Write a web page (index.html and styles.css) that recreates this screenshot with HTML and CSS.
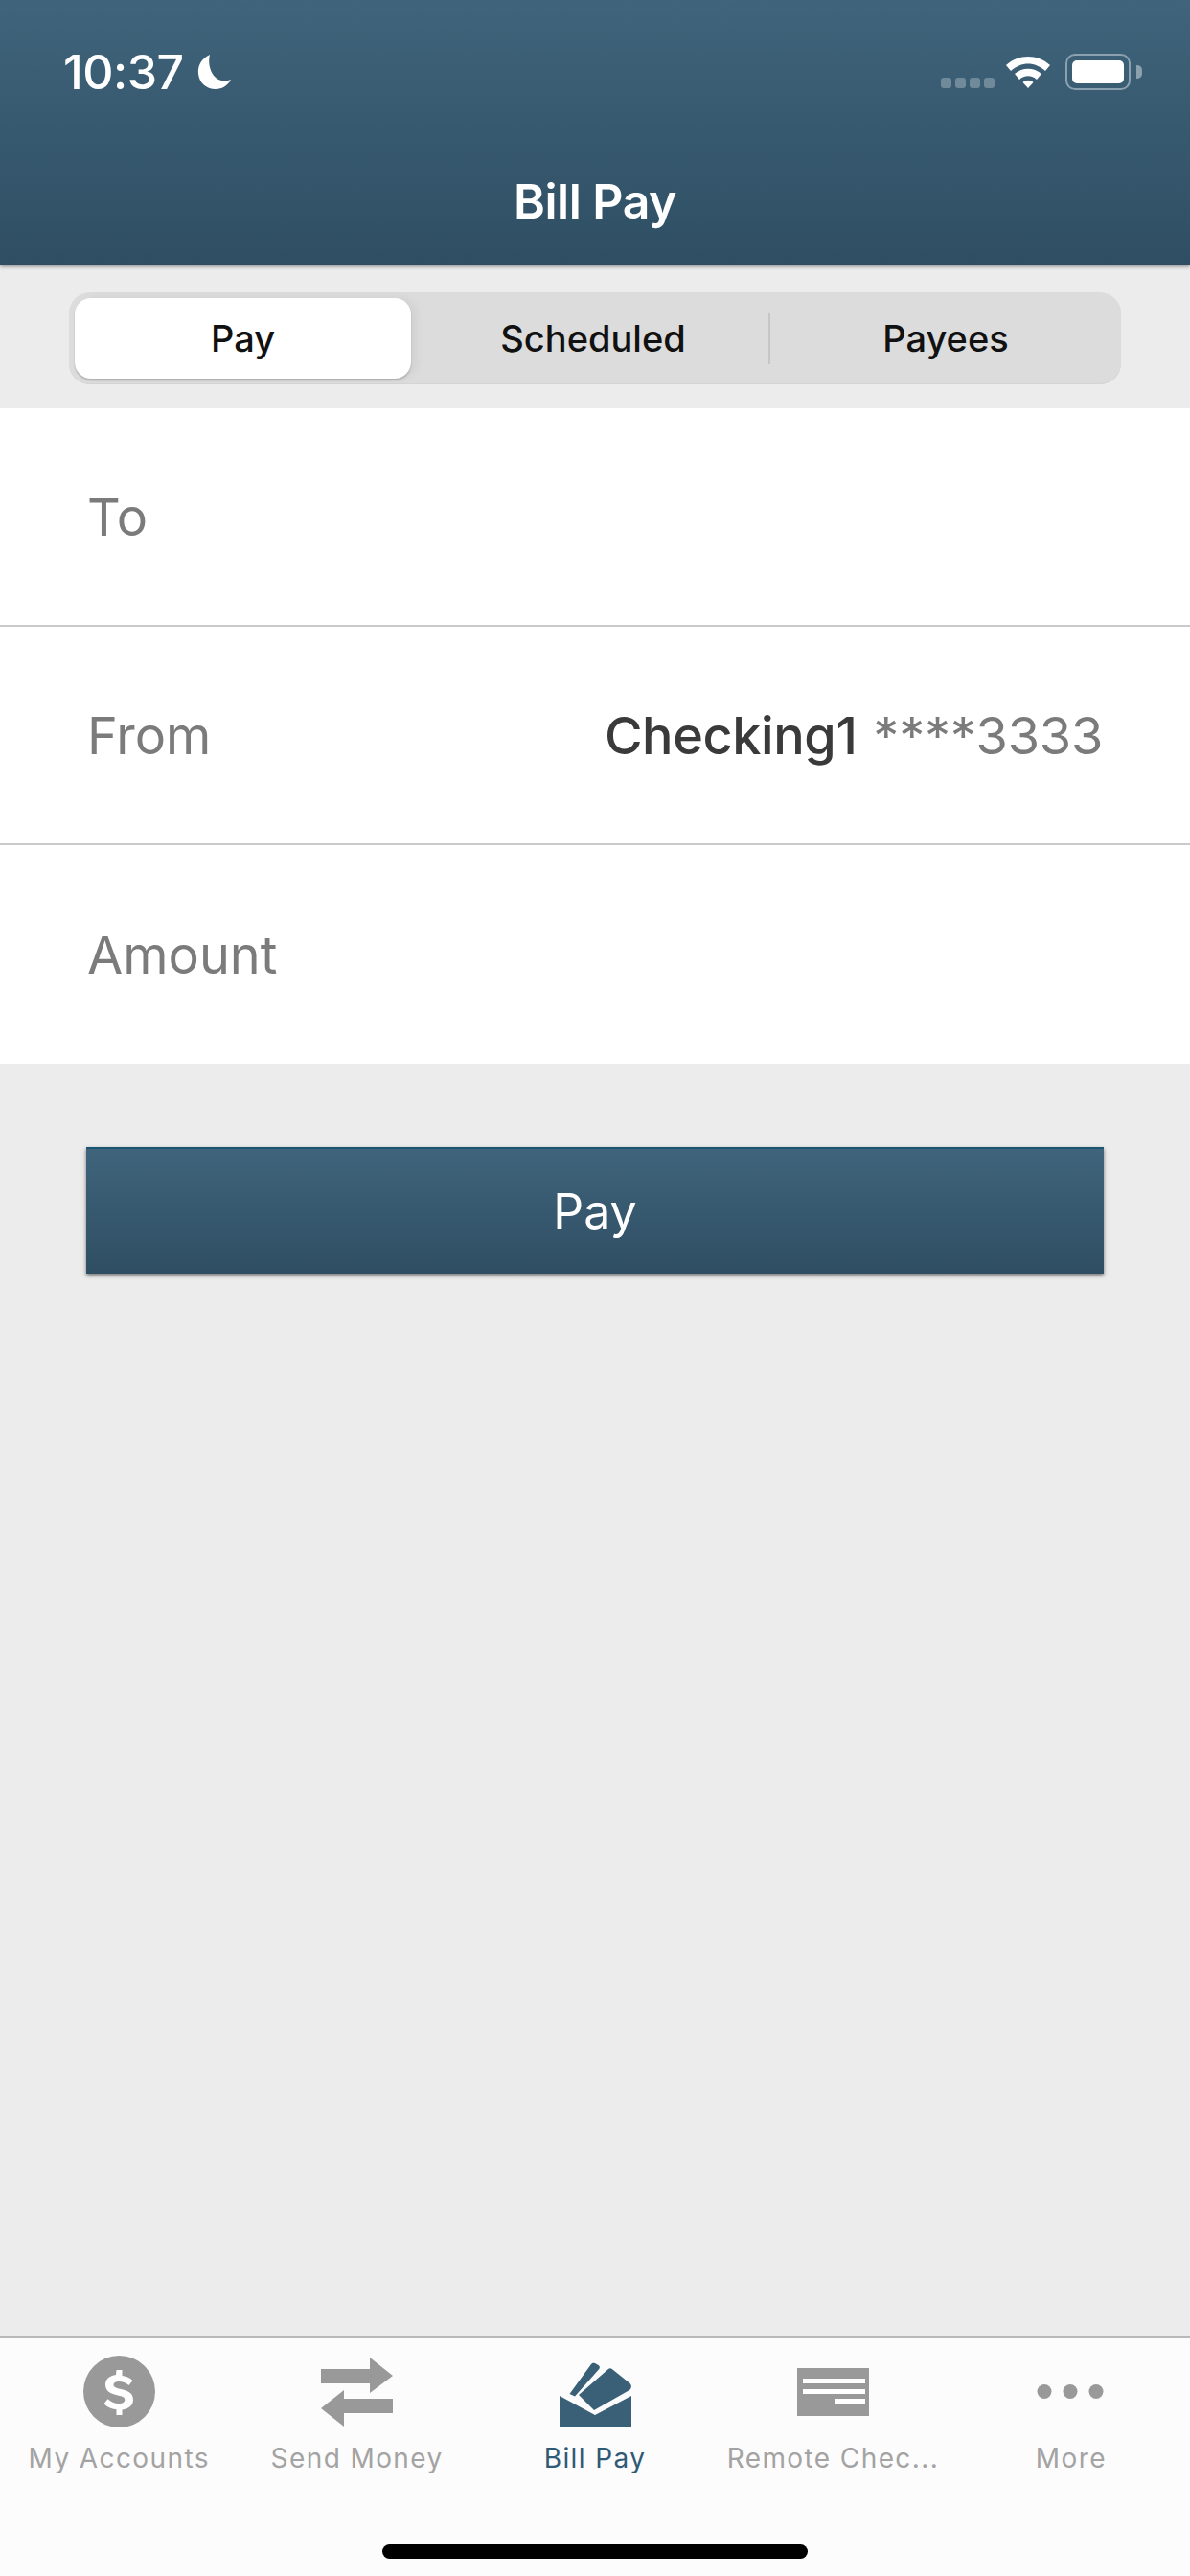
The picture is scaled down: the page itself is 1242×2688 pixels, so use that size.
FILE: index.html
```html
<!DOCTYPE html>
<html lang="en">

<head>
    <meta charset="UTF-8">
    <meta name="viewport" content="width=device-width, initial-scale=1.0">
    <title>Bill Pay</title>
    <link rel="stylesheet" href="styles.css">
</head>

<body>
    <div class="app">
        <!-- Header -->
        <header class="header">
            <div class="status-bar">
                <div class="status-left">
                    <span class="time">10:37</span>
                    <svg class="moon" viewBox="0 0 36 38">
                        <path d="M13 1C4 5 0 13 1 21c1 10 9 16 18 16 7 0 13-4 16-10-3 1-6 2-9 1C16 27 10 13 13 1z" fill="#fff" />
                    </svg>
                </div>
                <div class="status-right">
                    <div class="signal"><i></i><i></i><i></i><i></i></div>
                    <svg class="wifi" viewBox="0 0 48 36">
                        <path d="M1 12C14 0 34 0 47 12l-5 6C31 8 17 8 6 18z" fill="#fff" />
                        <path d="M10 21c8-7 20-7 28 0l-5 6c-5-5-13-5-18 0z" fill="#fff" />
                        <path d="M18.500 30c3-3 8-3 11 0L24 36z" fill="#fff" />
                    </svg>
                    <div class="battery">
                        <div class="battery-level"></div>
                    </div>
                    <div class="battery-nub"></div>
                </div>
            </div>
            <h1 class="title">Bill Pay</h1>
        </header>

        <!-- Segmented control -->
        <div class="segment-wrap">
            <div class="segment">
                <div class="segment-item segment-active">Pay</div>
                <div class="segment-item segment-middle">Scheduled</div>
                <div class="segment-divider"></div>
                <div class="segment-item segment-last">Payees</div>
            </div>
        </div>

        <!-- Form rows -->
        <div class="form">
            <div class="row">
                <span class="row-label">To</span>
            </div>
            <div class="row">
                <span class="row-label">From</span>
                <span class="row-value"><b>Checking1</b> ****3333</span>
            </div>
            <div class="row">
                <span class="row-label">Amount</span>
            </div>
        </div>

        <main class="content">
            <button class="pay-button">Pay</button>
        </main>

        <!-- Tab bar -->
        <nav class="tabbar">
            <div class="tabs">
                <div class="tab">
                    <svg class="tab-icon" viewBox="0 0 75 75">
                        <circle cx="37.500" cy="37.500" r="37.500" fill="#999" />
                        <path d="M34.500 15h6v6c5 .6 8.500 2.500 11 5l-4 5c-3-2.500-6.500-4-10.500-4-3.500 0-5.500 1.300-5.500 3.500 0 2.300 2.200 3.200 7 4.300 8 1.800 13.500 4.300 13.500 11.200 0 6-4.500 9.500-11.500 10.400V62h-6v-5.700c-5.500-.6-10-2.800-13-6l4-5c3.200 3 7 4.700 11.500 4.700 4 0 6.300-1.500 6.300-4 0-2.300-2.200-3.400-7.300-4.500-7.500-1.700-13-4.200-13-11 0-5.800 4.300-9.500 11-10.400z" fill="#fff" />
                    </svg>
                    <span class="tab-label">My Accounts</span>
                </div>
                <div class="tab">
                    <svg class="tab-icon" viewBox="0 0 75 75">
                        <path d="M0 14H51V2L75 21 51 39V29H0z" fill="#999" />
                        <path d="M75 45H24V36L0 55 24 74V60H75z" fill="#999" />
                    </svg>
                    <span class="tab-label">Send Money</span>
                </div>
                <div class="tab tab-active">
                    <svg class="tab-icon" viewBox="0 0 75 75">
                        <path d="M10.500 40L33 9c1-1.400 2.600-1.700 4-1l3.500 2c1.500 1 1.800 2.500.8 4L16 42.500z" fill="#3a6078" />
                        <path d="M20 41L51 14c1.200-1 2.600-1 3.800 0l18.700 15c2 1.800 1.800 5.500-.5 7L36 57z" fill="#3a6078" />
                        <path d="M0 42l37 20 38-20v33H0z" fill="#3a6078" />
                    </svg>
                    <span class="tab-label">Bill Pay</span>
                </div>
                <div class="tab">
                    <svg class="tab-icon" viewBox="0 0 75 75">
                        <path d="M0 13h75v50H0z" fill="#999" />
                        <path d="M6 24h65v5H6zM6 35h65v5H6zM39 45h32v5H39z" fill="#fff" />
                    </svg>
                    <span class="tab-label">Remote Chec...</span>
                </div>
                <div class="tab">
                    <svg class="tab-icon" viewBox="0 0 75 75">
                        <circle cx="10" cy="37.500" r="7.500" fill="#999" />
                        <circle cx="37" cy="37.500" r="7.500" fill="#999" />
                        <circle cx="64" cy="37.500" r="7.500" fill="#999" />
                    </svg>
                    <span class="tab-label">More</span>
                </div>
            </div>
            <div class="home-bar"></div>
        </nav>
    </div>
</body>

</html>
```

FILE: styles.css
```css
* {
    box-sizing: border-box;
}

body {
    margin: 0;
    background: #ececec;
    font-family: 'Inter', 'Liberation Sans', sans-serif;
}

.app {
    display: flex;
    flex-direction: column;
    height: 2688px;
    overflow: hidden;
}

/* Header */
.header {
    position: relative;
    z-index: 1;
    height: 276px;
    padding: 56px 50px 0 66px;
    background: linear-gradient(#3f647b, #2f4e63);
    box-shadow: 0 2px 4px rgba(0, 0, 0, 0.45);
    color: #FFFFFF;
}

.status-bar {
    display: flex;
    justify-content: space-between;
    align-items: flex-start;
    height: 38px;
}

.status-left {
    display: flex;
    align-items: center;
    gap: 14px;
}

.time {
    font-size: 50px;
    font-weight: 500;
    line-height: 38px;
    letter-spacing: -0.5px;
}

.moon {
    width: 36px;
    height: 38px;
}

.status-right {
    display: flex;
    align-items: flex-start;
}

.signal {
    display: flex;
    gap: 4px;
    margin-top: 25px;
    margin-right: 11px;
}

.signal i {
    width: 11px;
    height: 11px;
    border-radius: 3px;
    background: rgba(255, 255, 255, 0.28);
}

.wifi {
    width: 48px;
    height: 36px;
    margin-right: 15px;
}

.battery {
    width: 68px;
    height: 38px;
    padding: 5px;
    border: 2px solid #8ba1b0;
    border-radius: 10px;
}

.battery-level {
    height: 100%;
    border-radius: 5px;
    background: #FFFFFF;
}

.battery-nub {
    width: 6px;
    height: 14px;
    margin: 12px 0 0 6px;
    border-radius: 0 5px 5px 0;
    background: #8ba1b0;
}

.title {
    margin: 86px 0 0 -66px;
    width: 1242px;
    text-align: center;
    font-size: 50px;
    font-weight: 600;
    line-height: 60px;
    letter-spacing: -0.5px;
}

/* Segmented control */
.segment-wrap {
    height: 150px;
    padding: 29px 72px 0;
}

.segment {
    display: flex;
    align-items: center;
    height: 96px;
    padding: 0 6px;
    border-radius: 22px;
    background: #dcdcdc;
    box-shadow: inset 0 -1px 0 #d4d4d4;
}

.segment-item {
    flex: 1;
    height: 84px;
    font-size: 38px;
    font-weight: 500;
    line-height: 84px;
    text-align: center;
    color: #111111;
}

.segment-active {
    flex: none;
    width: 351px;
    border-radius: 17px;
    background: #FFFFFF;
    box-shadow: 0 2px 2px rgba(0, 0, 0, 0.18), 6px 0 10px rgba(0, 0, 0, 0.05);
}

.segment-middle {
    flex: none;
    width: 373px;
    padding-left: 7px;
}

.segment-last {
    padding-left: 6px;
}

.segment-divider {
    width: 2px;
    height: 53px;
    background: #c6c6c6;
}

/* Form */
.form {
    background: #FFFFFF;
}

.row {
    display: flex;
    justify-content: space-between;
    align-items: center;
    height: 228px;
    padding: 0 91px;
    border-bottom: 2px solid #cacaca;
    font-size: 54px;
    color: #7b7b7b;
}

.row:last-child {
    border-bottom: none;
}

.row-value {
    letter-spacing: -0.25px;
}

.row-value b {
    font-weight: 500;
    color: #3a3a3a;
    margin-right: 2px;
    letter-spacing: -0.4px;
}

/* Content */
.content {
    flex: 1;
    padding: 87px 90px 0;
}

.pay-button {
    display: block;
    width: 1062px;
    height: 132px;
    border: none;
    border-top: 2px solid #1a5572;
    background: linear-gradient(#3f647b, #2f4e63);
    box-shadow: 0 2px 4px rgba(0, 0, 0, 0.5);
    font-family: inherit;
    font-size: 50px;
    color: #FFFFFF;
}

/* Tab bar */
.tabbar {
    height: 250px;
    border-top: 2px solid #b9b9b9;
    background: #fcfcfc;
}

.tabs {
    display: flex;
    padding-top: 18px;
}

.tab {
    flex: 1;
    display: flex;
    flex-direction: column;
    align-items: center;
    min-width: 0;
    color: #a3a3a3;
}

.tab-active {
    color: #2f5a76;
}

.tab-icon {
    width: 75px;
    height: 75px;
}

.tab-label {
    margin-top: 14px;
    font-size: 28px;
    line-height: 36px;
    letter-spacing: 1.4px;
    white-space: nowrap;
}

.home-bar {
    width: 444px;
    height: 15px;
    margin: 72px auto 0;
    border-radius: 8px;
    background: #000000;
}
```
